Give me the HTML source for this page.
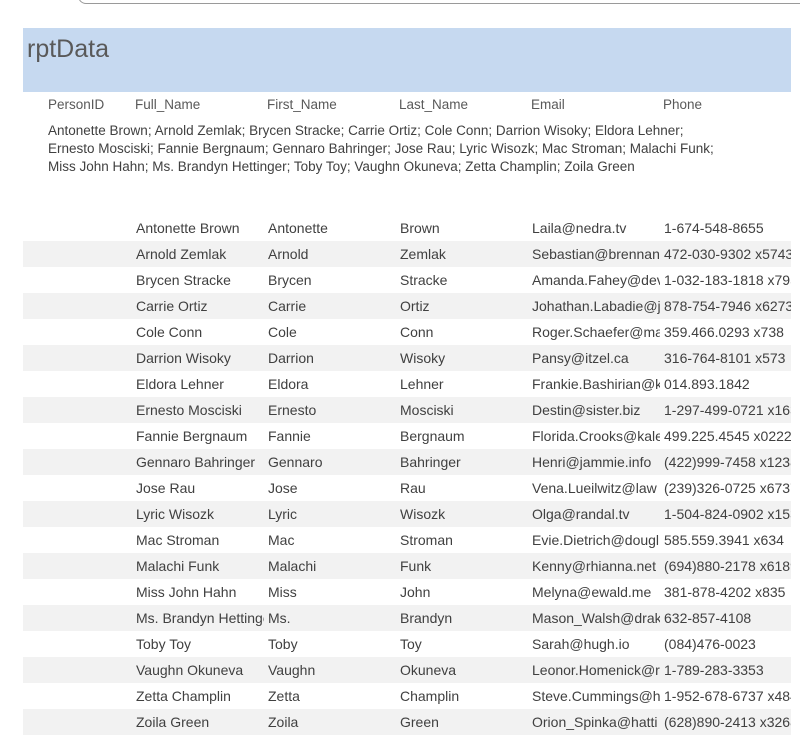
<!DOCTYPE html>
<html><head><style>
body{margin:0;width:800px;height:734px;overflow:hidden;background:#fff;font-family:"Liberation Sans",sans-serif;color:#404040;position:relative}
.top{position:absolute;left:78px;top:-10px;width:740px;height:13px;border:1px solid #9a9a9a;border-top:none;border-radius:0 0 0 8px}
.band{position:absolute;left:23px;top:28px;width:768px;height:64px;background:#c6d9f0}
.title{position:absolute;left:27px;top:35px;font-size:25px;color:#595959}
.h{position:absolute;top:97px;font-size:13.5px;color:#595959}
.list{position:absolute;left:48px;top:122px;font-size:13.5px;line-height:18px;color:#404040;width:720px}
.row{position:absolute;left:23px;width:768px;height:26px}
.row.s{background:#f2f2f2}
.c{position:absolute;top:5px;font-size:14px;white-space:nowrap;overflow:hidden;width:128px}
</style></head><body>
<div class="top"></div>
<div class="band"></div>
<div class="title">rptData</div>
<div class="h" style="left:48px">PersonID</div>
<div class="h" style="left:135px">Full_Name</div>
<div class="h" style="left:267px">First_Name</div>
<div class="h" style="left:399px">Last_Name</div>
<div class="h" style="left:531px">Email</div>
<div class="h" style="left:663px">Phone</div>
<div class="list">Antonette Brown; Arnold Zemlak; Brycen Stracke; Carrie Ortiz; Cole Conn; Darrion Wisoky; Eldora Lehner;<br>Ernesto Mosciski; Fannie Bergnaum; Gennaro Bahringer; Jose Rau; Lyric Wisozk; Mac Stroman; Malachi Funk;<br>Miss John Hahn; Ms. Brandyn Hettinger; Toby Toy; Vaughn Okuneva; Zetta Champlin; Zoila Green</div>
<div id="rows"></div>
<script>
var d=[["Antonette Brown","Antonette","Brown","Laila@nedra.tv","1-674-548-8655"],
["Arnold Zemlak","Arnold","Zemlak","Sebastian@brennan.","472-030-9302 x5743"],
["Brycen Stracke","Brycen","Stracke","Amanda.Fahey@dev","1-032-183-1818 x795"],
["Carrie Ortiz","Carrie","Ortiz","Johathan.Labadie@j","878-754-7946 x6273"],
["Cole Conn","Cole","Conn","Roger.Schaefer@ma","359.466.0293 x738"],
["Darrion Wisoky","Darrion","Wisoky","Pansy@itzel.ca","316-764-8101 x573"],
["Eldora Lehner","Eldora","Lehner","Frankie.Bashirian@k","014.893.1842"],
["Ernesto Mosciski","Ernesto","Mosciski","Destin@sister.biz","1-297-499-0721 x163"],
["Fannie Bergnaum","Fannie","Bergnaum","Florida.Crooks@kale","499.225.4545 x0222"],
["Gennaro Bahringer","Gennaro","Bahringer","Henri@jammie.info","(422)999-7458 x1238"],
["Jose Rau","Jose","Rau","Vena.Lueilwitz@law","(239)326-0725 x6737"],
["Lyric Wisozk","Lyric","Wisozk","Olga@randal.tv","1-504-824-0902 x153"],
["Mac Stroman","Mac","Stroman","Evie.Dietrich@dougl","585.559.3941 x634"],
["Malachi Funk","Malachi","Funk","Kenny@rhianna.net","(694)880-2178 x6189"],
["Miss John Hahn","Miss","John","Melyna@ewald.me","381-878-4202 x835"],
["Ms. Brandyn Hettinger","Ms.","Brandyn","Mason_Walsh@drak","632-857-4108"],
["Toby Toy","Toby","Toy","Sarah@hugh.io","(084)476-0023"],
["Vaughn Okuneva","Vaughn","Okuneva","Leonor.Homenick@r","1-789-283-3353"],
["Zetta Champlin","Zetta","Champlin","Steve.Cummings@h","1-952-678-6737 x484"],
["Zoila Green","Zoila","Green","Orion_Spinka@hatti","(628)890-2413 x3268"]];
var xs=[113,245,377,509,641],h="";
d.forEach(function(r,i){h+='<div class="row'+(i%2?' s':'')+'" style="top:'+(215+26*i)+'px">';
r.forEach(function(t,j){h+='<div class="c" style="left:'+xs[j]+'px;width:'+(j==4?127:128)+'px">'+t+'</div>'});h+='</div>'});
document.getElementById('rows').innerHTML=h;
</script>
</body></html>
